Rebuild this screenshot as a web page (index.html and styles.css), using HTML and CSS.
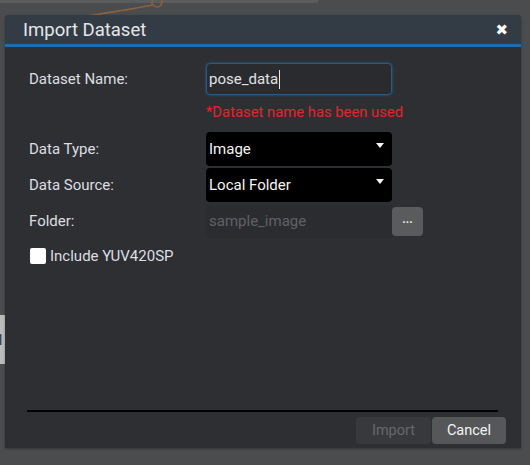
FILE: index.html
```html
<!DOCTYPE html>
<html>
<head>
<meta charset="utf-8">
<link rel="stylesheet" href="styles.css">
</head>
<body>
<div class="page">
  <div class="top-bar"></div>
  <svg class="wire" width="200" height="20" viewBox="0 0 200 20">
    <path d="M88 16 C110 12 135 9 152 5" stroke="#8a6143" stroke-width="1.6" fill="none"/>
    <circle cx="157" cy="2" r="5" stroke="#8a6143" stroke-width="1.6" fill="none"/>
  </svg>
  <div class="side-node"><span>1</span></div>

  <div class="modal">
    <div class="modal-header">
      <span class="modal-title">Import Dataset</span>
      <span class="modal-close">&#x2716;</span>
    </div>
    <div class="modal-body">
      <div class="row row-name">
        <label class="label">Dataset Name:</label>
        <div class="control">
          <div class="text-input focused"><span>pose_data</span><span class="cursor"></span></div>
        </div>
      </div>
      <div class="error">*Dataset name has been used</div>
      <div class="row row-select">
        <label class="label">Data Type:</label>
        <div class="control">
          <div class="select"><span>Image</span><span class="caret"></span></div>
        </div>
      </div>
      <div class="row row-select2">
        <label class="label">Data Source:</label>
        <div class="control">
          <div class="select"><span>Local Folder</span><span class="caret"></span></div>
        </div>
      </div>
      <div class="row row-folder">
        <label class="label">Folder:</label>
        <div class="control folder-control">
          <div class="folder-input">sample_image</div>
          <button class="browse">...</button>
        </div>
      </div>
      <div class="check-row">
        <span class="checkbox"></span>
        <span class="check-label">Include YUV420SP</span>
      </div>
    </div>
    <div class="modal-footer">
      <div class="footer-line"></div>
      <div class="buttons">
        <button class="btn btn-import">Import</button>
        <button class="btn btn-cancel">Cancel</button>
      </div>
    </div>
  </div>
</div>
</body>
</html>
```
FILE: styles.css
```css
html, body {
  margin: 0;
  padding: 0;
}
body {
  background: #4b4c4e;
  font-family: Roboto, "Liberation Sans", sans-serif;
  width: 530px;
  height: 465px;
  overflow: hidden;
}
.page {
  position: relative;
  width: 530px;
  height: 465px;
}
.top-bar {
  position: absolute;
  left: -10px;
  top: -4px;
  width: 329px;
  height: 7px;
  border-radius: 4px;
  background: #5b5c5e;
}
.wire {
  position: absolute;
  left: 0;
  top: 0;
}
.side-node {
  position: absolute;
  left: -20px;
  top: 315px;
  width: 25px;
  height: 49px;
  background: #bcbcbc;
  display: flex;
  align-items: center;
  justify-content: flex-end;
  font-size: 14px;
  color: #333;
}
.side-node span {
  margin-right: 1px;
}
.modal {
  position: absolute;
  left: 5px;
  top: 15px;
  width: 516px;
  height: 433px;
  background: #2e2f33;
  border-radius: 4px 4px 0 0;
  display: flex;
  flex-direction: column;
  box-shadow: 0 1px 3px rgba(0,0,0,0.3);
}
.modal-header {
  height: 29px;
  background: #333b45;
  border-bottom: 3px solid #1d6db5;
  border-radius: 4px 4px 0 0;
  display: flex;
  align-items: center;
  justify-content: space-between;
  padding: 0 13px 0 18px;
}
.modal-title {
  color: #e4e6e8;
  font-size: 18.5px;
}
.modal-close {
  color: #ffffff;
  font-size: 15px;
  font-family: "DejaVu Sans", sans-serif;
  font-weight: bold;
}
.modal-body {
  flex: 1;
  padding: 16px 0 0 24px;
  display: flex;
  flex-direction: column;
}
.row {
  display: flex;
  align-items: center;
}
.label {
  width: 177px;
  color: #dcdee2;
  font-size: 15px;
}
.control {
  width: 186px;
}
.text-input {
  box-sizing: border-box;
  height: 32px;
  border: 1px solid #2b5a80;
  box-shadow: 0 0 2px 1px rgba(40,100,150,0.45);
  border-radius: 4px;
  background: #2a2b2e;
  color: #e0e2e4;
  font-size: 15px;
  display: flex;
  align-items: center;
  padding-left: 2px;
}
.cursor {
  display: inline-block;
  width: 1px;
  height: 19px;
  background: #e8e8e8;
  margin-left: 1px;
}
.error {
  margin: 8px 0 0 177px;
  color: #e0262d;
  font-size: 14.8px;
  line-height: 18px;
}
.row-select {
  margin-top: 11px;
}
.row-select2 {
  margin-top: 2px;
}
.select {
  box-sizing: border-box;
  height: 34px;
  background: #000;
  border-radius: 4px;
  color: #f4f4f4;
  font-size: 15px;
  display: flex;
  align-items: center;
  justify-content: space-between;
  padding: 0 8px 0 3px;
}
.caret {
  width: 0;
  height: 0;
  border-left: 4px solid transparent;
  border-right: 4px solid transparent;
  border-top: 5px solid #f4f4f4;
  margin-bottom: 8px;
}
.row-folder {
  margin-top: 3px;
}
.folder-control {
  display: flex;
  align-items: center;
  width: 218px;
}
.folder-input {
  box-sizing: border-box;
  width: 186px;
  height: 32px;
  background: #2b2c30;
  color: #606164;
  font-size: 15px;
  display: flex;
  align-items: center;
  padding-left: 3px;
}
.browse {
  width: 31px;
  height: 29px;
  margin-left: 0;
  border: none;
  border-radius: 4px;
  background: #5a5b5d;
  color: #e8e8e8;
  font-family: Roboto, sans-serif;
  font-size: 12px;
  font-weight: bold;
  padding: 0 0 4px 0;
}
.check-row {
  margin-top: 10px;
  display: flex;
  align-items: center;
  margin-left: 1px;
}
.checkbox {
  width: 16px;
  height: 16px;
  border-radius: 2px;
  background: #ffffff;
}
.check-label {
  margin-left: 4px;
  color: #dcdee2;
  font-size: 15px;
}
.modal-footer {
  padding: 0 23px 4px 22px;
}
.footer-line {
  height: 2px;
  background: #000;
}
.buttons {
  display: flex;
  justify-content: flex-end;
  gap: 1px;
  margin-top: 5px;
  margin-right: -8px;
}
.btn {
  height: 27px;
  border: none;
  border-radius: 4px;
  font-family: Roboto, sans-serif;
  font-size: 14.5px;
  padding: 0;
}
.btn-import {
  width: 75px;
  background: #38393c;
  color: #67686b;
}
.btn-cancel {
  width: 74px;
  background: #565759;
  color: #f2f4f6;
}
```
